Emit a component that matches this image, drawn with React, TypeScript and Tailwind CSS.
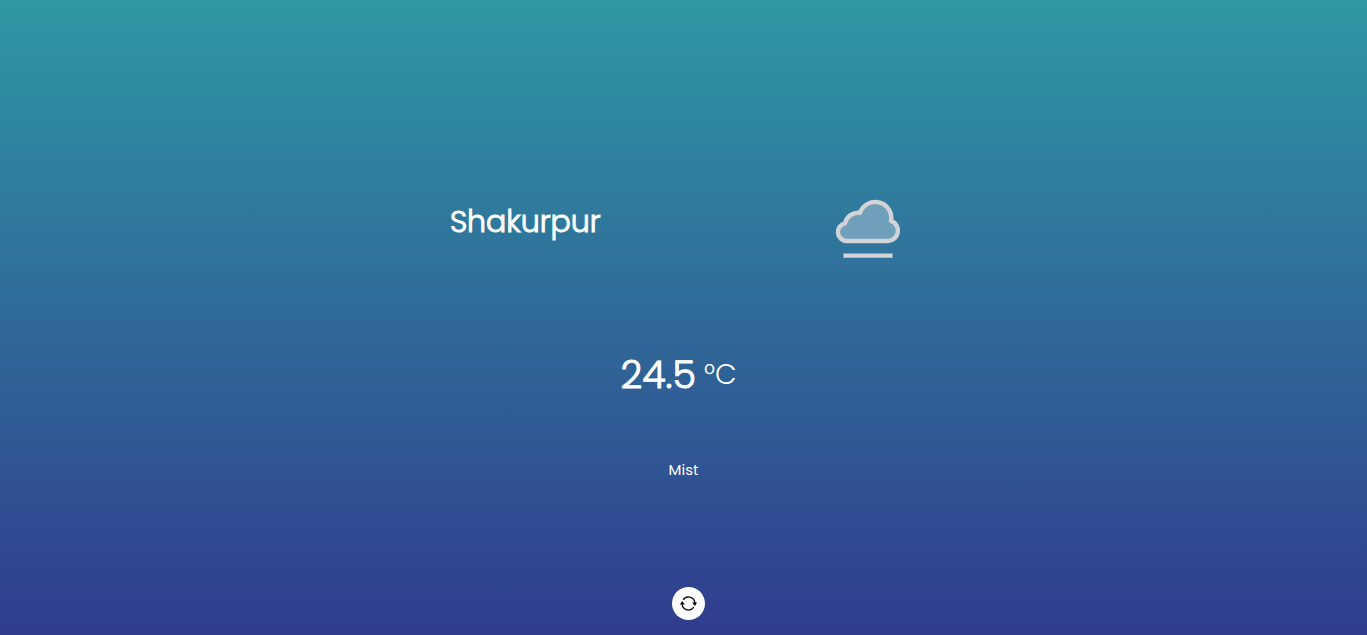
function MistIcon() {
  return (
    <svg viewBox="0 0 100 100" className="size-[100px]" role="img" aria-label="Mist">
      <path
        d="M30 61A8.95 8.95 0 0 1 28 43.3A13.6 13.6 0 0 1 43 32.8A16.05 16.05 0 0 1 74 40.8A10.4 10.4 0 0 1 71 61Z"
        fill="#6f9fbb"
        stroke="#d1d3d7"
        strokeWidth="4.4"
        strokeLinejoin="round"
      />
      <path d="M26.4 75.6H75.6" stroke="#d1d3d7" strokeWidth="4.4" />
    </svg>
  );
}

function RefreshIcon() {
  return (
    <svg viewBox="0 0 17 17" className="size-[17px]" aria-hidden="true">
      <g fill="none" stroke="#000" strokeWidth="1.3">
        <path d="M3.2 4.8A6.4 6.4 0 0 1 14.9 8.5" />
        <path d="M13.8 12.2A6.4 6.4 0 0 1 2.1 8.5" />
      </g>
      <path d="M12.2 7.6H17L14.9 11Z" />
      <path d="M0 9.4H4.8L2.1 6Z" />
    </svg>
  );
}

export default function App() {
  return (
    <main className="flex min-h-screen flex-col items-center bg-linear-to-b/srgb from-[#2f98a4] to-[#303c8e] pt-[180px] pb-[15px] font-[Poppins,Inter,sans-serif] font-light text-white">
      <header className="flex w-1/2 items-center justify-around">
        <h1 className="pb-4 text-[30px] leading-10 [-webkit-text-stroke:1px_white]">Shakurpur</h1>
        <MistIcon />
      </header>
      <p className="mt-[70px] flex items-center gap-2 pr-[10px] leading-[50px]">
        <span className="text-[38px] [-webkit-text-stroke:1px_white]">24.5</span>
        <span className="text-[28px]">°C</span>
      </p>
      <p className="mt-[58px] text-[15px] leading-6 font-normal">Mist</p>
      <div className="mt-auto pl-[10px]">
        <button
          type="button"
          aria-label="Refresh weather"
          className="flex size-[33px] items-center justify-center rounded-full bg-white pr-px"
        >
          <RefreshIcon />
        </button>
      </div>
    </main>
  );
}
